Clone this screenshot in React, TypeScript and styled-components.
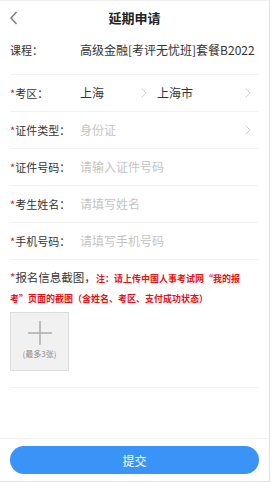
import styled, { createGlobalStyle } from 'styled-components';

const GlobalStyle = createGlobalStyle`
  * {
    box-sizing: border-box;
  }
  body {
    margin: 0;
    background: #ffffff;
    font-family: 'Noto Sans CJK SC', 'Noto Sans', sans-serif;
    color: #333333;
  }
`;

const Page = styled.div`
  width: 270px;
  height: 482px;
  display: flex;
  flex-direction: column;
  background: #ffffff;
  border-top: 1px solid #f0f0f0;
  border-right: 1px solid #e2e2e2;
  border-bottom: 1px solid #e2e2e2;
`;

const Header = styled.div`
  height: 33px;
  position: relative;
  display: flex;
  align-items: center;
  justify-content: center;
`;

const BackButton = styled.span`
  position: absolute;
  left: 9px;
  top: 10px;
  display: flex;
`;

const Title = styled.h1`
  margin: 0;
  font-size: 13px;
  font-weight: bold;
  color: #222222;
`;

const Form = styled.div`
  padding: 0 10px;
`;

interface RowProps {
  $height: string;
  $align?: string;
  $padTop?: string;
}

const Row = styled.div<RowProps>`
  display: flex;
  align-items: ${(p) => p.$align ?? 'center'};
  height: ${(p) => p.$height};
  padding-top: ${(p) => p.$padTop ?? '0'};
  border-bottom: 1px solid #f2f2f2;
`;

const Label = styled.span`
  width: 70px;
  flex-shrink: 0;
  font-size: 11px;
  line-height: 14px;
  color: #333333;
  white-space: nowrap;
`;

const Star = styled.span`
  color: #e02020;
`;

interface ValueProps {
  $muted?: boolean;
}

const Value = styled.span<ValueProps>`
  font-size: 12px;
  line-height: 14px;
  color: ${(p) => (p.$muted ? '#c4c4c4' : '#333333')};
  white-space: nowrap;
`;

const Picker = styled.div`
  flex: 1;
  display: flex;
  align-items: center;
  justify-content: space-between;
  padding-right: 8px;
`;

const AreaGrid = styled.div`
  flex: 1;
  display: grid;
  grid-template-columns: 70px 1fr;
  column-gap: 7px;
`;

const PickerCell = styled.div<{ $padRight: string }>`
  display: flex;
  align-items: center;
  justify-content: space-between;
  padding-right: ${(p) => p.$padRight};
`;

const UploadSection = styled.div`
  padding: 8px 0 16px;
  border-bottom: 1px solid #f2f2f2;
`;

const UploadLabel = styled.div`
  font-size: 11.5px;
  line-height: 19px;
  color: #333333;
  padding-right: 10px;
`;

const Note = styled.span`
  font-size: 9px;
  font-weight: bold;
  color: #e81010;
`;

const UploadBox = styled.div`
  margin-top: 4px;
  width: 59px;
  height: 59px;
  background: #f1f1f1;
  border: 1px solid #dcdcdc;
  display: flex;
  flex-direction: column;
  align-items: center;
  padding-top: 8px;
`;

const UploadHint = styled.span`
  font-size: 8px;
  color: #8a8a8a;
  margin-top: 3px;
`;

const Footer = styled.div`
  margin-top: auto;
  border-top: 1px solid #f2f2f2;
  padding: 7px 10px 7px;
`;

const SubmitButton = styled.button`
  width: 100%;
  height: 28px;
  border: none;
  border-radius: 14px;
  background: #3a94f8;
  color: #ffffff;
  font-family: 'Noto Sans CJK SC', 'Noto Sans', sans-serif;
  font-size: 12px;
  cursor: pointer;
`;

function Chevron() {
  return (
    <svg width="6" height="10" viewBox="0 0 6 10">
      <polyline points="0.7,0.7 5,5 0.7,9.3" fill="none" stroke="#d2d2d2" strokeWidth="1" />
    </svg>
  );
}

function BackArrow() {
  return (
    <svg width="10" height="14" viewBox="0 0 10 14">
      <polyline points="7.5,1 2,7 7.5,13" fill="none" stroke="#777777" strokeWidth="1.4" />
    </svg>
  );
}

function Plus() {
  return (
    <svg width="24" height="24" viewBox="0 0 24 24">
      <line x1="12" y1="0" x2="12" y2="24" stroke="#ababab" strokeWidth="1.5" />
      <line x1="0" y1="12" x2="24" y2="12" stroke="#ababab" strokeWidth="1.5" />
    </svg>
  );
}

const textFields = [
  { label: '证件号码：', placeholder: '请输入证件号码' },
  { label: '考生姓名：', placeholder: '请填写姓名' },
  { label: '手机号码：', placeholder: '请填写手机号码' },
];

export default function App() {
  return (
    <>
      <GlobalStyle />
      <Page>
        <Header>
          <BackButton>
            <BackArrow />
          </BackButton>
          <Title>延期申请</Title>
        </Header>
        <Form>
          <Row $height="41px" $align="flex-start" $padTop="9px">
            <Label>课程：</Label>
            <Value>高级金融[考评无忧班]套餐B2022</Value>
          </Row>
          <Row $height="37px">
            <Label>
              <Star>*</Star>考区：
            </Label>
            <AreaGrid>
              <PickerCell $padRight="3px">
                <Value>上海</Value>
                <Chevron />
              </PickerCell>
              <PickerCell $padRight="8px">
                <Value>上海市</Value>
                <Chevron />
              </PickerCell>
            </AreaGrid>
          </Row>
          <Row $height="37px">
            <Label>
              <Star>*</Star>证件类型：
            </Label>
            <Picker>
              <Value $muted>身份证</Value>
              <Chevron />
            </Picker>
          </Row>
          {textFields.map((f) => (
            <Row key={f.label} $height="37px">
              <Label>
                <Star>*</Star>
                {f.label}
              </Label>
              <Value $muted>{f.placeholder}</Value>
            </Row>
          ))}
          <UploadSection>
            <UploadLabel>
              <Star>*</Star>报名信息截图，
              <Note>注：请上传中国人事考试网“我的报考”页面的截图（含姓名、考区、支付成功状态）</Note>
            </UploadLabel>
            <UploadBox>
              <Plus />
              <UploadHint>(最多3张)</UploadHint>
            </UploadBox>
          </UploadSection>
        </Form>
        <Footer>
          <SubmitButton>提交</SubmitButton>
        </Footer>
      </Page>
    </>
  );
}
